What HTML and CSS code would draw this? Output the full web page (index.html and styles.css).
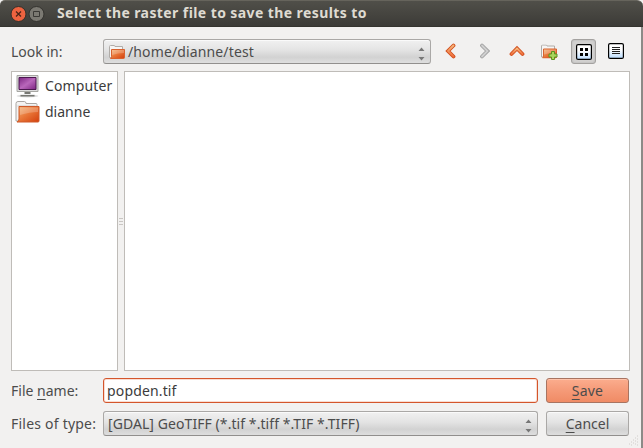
FILE: index.html
```html
<!DOCTYPE html>
<html lang="en">
<head>
<meta charset="utf-8">
<title>Select the raster file to save the results to</title>
<link rel="stylesheet" href="styles.css">
</head>
<body>
<svg width="0" height="0" class="defs" aria-hidden="true">
  <defs>
    <linearGradient id="orange" x1="0" y1="0" x2="1" y2="1"><stop offset="0" stop-color="#f4b77a"/><stop offset=".5" stop-color="#e87537"/><stop offset="1" stop-color="#d33f0c"/></linearGradient>
    <linearGradient id="arrow" x1="0" y1="0" x2="0" y2="1"><stop offset="0" stop-color="#f6b87c"/><stop offset="1" stop-color="#f0703c"/></linearGradient>
    <linearGradient id="screen" x1="0" y1="0" x2="1" y2="1"><stop offset="0" stop-color="#7c2582"/><stop offset=".5" stop-color="#b967bb"/><stop offset="1" stop-color="#7c2582"/></linearGradient>
    <linearGradient id="tile" x1="0" y1="0" x2="0" y2="1"><stop offset=".4" stop-color="#fff"/><stop offset="1" stop-color="#b9dcff"/></linearGradient>
    <symbol id="folder" viewBox="0 0 24 22">
      <path d="M.5 20V2.500Q.5.5 2.500.5H9q1.500 0 1.500 2h10q1 0 1 1V20z" fill="#f4f3f2" stroke="#aaa6a2"/>
      <path d="M2 5h18" stroke="#ccc" fill="none"/>
      <path d="M3.500 5.500h20v14.500q0 1-1 1H1.500q2-1 2-3z" fill="url(#orange)" stroke="#cf5a2a"/>
      <path d="M4.500 6.500h18v4.500q-8 0-18 3z" fill="#fff" opacity=".22"/>
    </symbol>
    <symbol id="smallfolder" viewBox="0 0 16 14">
      <path d="M.5 12.500V1.500q0-1 1-1H5q1 0 1 1h7.500v11z" fill="#f6f5f4" stroke="#b0aca8"/>
      <path d="M2.500 4.500h13v8q0 1-1 1h-13q1-.5 1-2z" fill="url(#orange)" stroke="#d9622f"/>
      <path d="M3 5h12v3q-6 0-12 2z" fill="#fff" opacity=".22"/>
    </symbol>
  </defs>
</svg>
<div class="window">
  <header class="titlebar">
    <svg class="controls" width="36" height="18" viewBox="0 0 36 18">
      <circle cx="8.500" cy="9" r="7.500" fill="#ee6340" stroke="#33302a"/>
      <path d="M6 6.500l5 5M11 6.500l-5 5" stroke="#4b2518" stroke-width="1.300"/>
      <circle cx="26.500" cy="9" r="7.500" fill="#7b7972" stroke="#33322e"/>
      <path d="M23.500 6.500h6v5h-6z" fill="none" stroke="#3a3935"/>
    </svg>
    <h1 class="title"><span class="t-title">Select the raster file to save the results to</span></h1>
  </header>
  <main class="content">
    <div class="lookrow">
      <span class="label"><span class="t-look">Look in:</span></span>
      <div class="combo path">
        <svg width="16" height="14"><use href="#smallfolder" width="16" height="14"/></svg>
        <span class="t-path">/home/dianne/test</span>
        <svg class="spin" width="7" height="14" viewBox="0 0 7 14"><path d="M.5 4L3.500.5 6.500 4zM.5 10L3.500 13.500 6.500 10z" fill="#777"/></svg>
      </div>
      <nav class="tools">
        <span class="tool raised"><svg width="12" height="16" viewBox="0 0 12 16"><path d="M8.500 2.500L3 8l5.500 5.500" fill="none" stroke="#d2501f" stroke-width="3.800" stroke-linecap="round"/><path d="M8.500 2.500L3 8l5.500 5.500" fill="none" stroke="url(#arrow)" stroke-width="1.800" stroke-linecap="round"/></svg></span>
        <span class="tool raised"><svg width="12" height="16" viewBox="0 0 12 16"><path d="M4 2.500L9.500 8 4 13.500" fill="none" stroke="#a3a3a3" stroke-width="3.800" stroke-linecap="round"/><path d="M4 2.500L9.500 8 4 13.500" fill="none" stroke="#d0d0d0" stroke-width="1.800" stroke-linecap="round"/></svg></span>
        <span class="tool raised"><svg width="16" height="12" viewBox="0 0 16 12"><path d="M2.500 9L8 3.500 13.500 9" fill="none" stroke="#d2501f" stroke-width="3.800" stroke-linecap="round"/><path d="M2.500 9L8 3.500 13.500 9" fill="none" stroke="url(#arrow)" stroke-width="1.800" stroke-linecap="round"/></svg></span>
        <span class="tool"><svg width="17" height="16" viewBox="0 0 17 16"><use href="#smallfolder" y=".5" width="16" height="14"/><path d="M10.500 7.500h3v2.500h2.500v3h-2.500v2.500h-3V13H8v-3h2.500z" fill="#a9d45c" stroke="#5a9420"/></svg></span>
        <span class="tool active"><svg width="16" height="16" viewBox="0 0 16 16"><rect x=".6" y=".6" width="14.800" height="14.800" rx="1.500" fill="url(#tile)" stroke="#000" stroke-width="1.200"/><path d="M4 4h3v3H4zM9 4h3v3H9zM4 9h3v3H4zM9 9h3v3H9z"/></svg></span>
        <span class="tool raised"><svg width="16" height="16" viewBox="0 0 16 16"><rect x=".6" y=".6" width="14.800" height="14.800" rx="1.500" fill="url(#tile)" stroke="#000" stroke-width="1.200"/><path d="M4 4.500h8M4 6.500h8M4 8.500h8M4 10.500h8" stroke="#222"/></svg></span>
      </nav>
    </div>
    <div class="panes">
      <ul class="places">
        <li class="place"><svg width="24" height="24" viewBox="0 0 24 24"><ellipse cx="12" cy="22" rx="11" ry="1.500" fill="#ddd"/><path d="M1.500 1.500h21v16h-21z" fill="#ddd" stroke="#a7a7a3"/><path d="M3.500 3.500h17v12h-17z" fill="url(#screen)" stroke="#4b174f"/><path d="M9 18h6v2l4 1v1.500H5V21l4-1z" fill="#777873"/><path d="M5 20.500h14" stroke="#eee"/></svg><span class="t-computer">Computer</span></li>
        <li class="place"><svg width="25" height="22"><use href="#folder" width="25" height="22"/></svg><span class="t-dianne">dianne</span></li>
      </ul>
      <div class="handle"><i></i><i></i><i></i></div>
      <div class="files"></div>
    </div>
    <div class="form">
      <span class="label"><span class="t-name">File <span class="key">n</span>ame:</span></span>
      <div class="input"><span class="t-file">popden.tif</span></div>
      <div class="button primary"><span class="t-save"><span class="key">S</span>ave</span></div>
      <span class="label"><span class="t-type">Files of type:</span></span>
      <div class="combo"><span class="t-gdal">[GDAL] GeoTIFF (*.tif *.tiff *.TIF *.TIFF)</span>
        <svg class="spin" width="7" height="14" viewBox="0 0 7 14"><path d="M.5 4L3.500.5 6.500 4zM.5 10L3.500 13.500 6.500 10z" fill="#777"/></svg>
      </div>
      <div class="button"><span class="t-cancel"><span class="key">C</span>ancel</span></div>
    </div>
    <svg class="grip" width="11" height="11" viewBox="0 0 11 11"><path d="M9 1h1M7 3h1M9 4h1M5 5h1M7 6h1M9 7h1M3 7h1M5 8h1M7 9h1M1 9h1M3 10h1M9 10h1" stroke="#d0cdca"/></svg>
  </main>
</div>
</body>
</html>
```

FILE: styles.css
```css
* { box-sizing: border-box; }
body { margin: 0; background: #3c3b37; font: 14px/20px "Noto Sans", "Open Sans", sans-serif; color: #4c4c4c; }
.defs { position: absolute; }
.window { width: 643px; height: 448px; overflow: hidden; display: flex; flex-direction: column; background: #f2f1f0; }
.titlebar { height: 27px; flex: none; display: flex; align-items: center; padding-left: 10px; gap: 11px; background: linear-gradient(#504f49, #3c3b37); border-top: 1px solid #66645c; border-bottom: 1px solid #35342f; border-radius: 5px 6px 0 0; }
.title { margin: 0 0 2px; font-size: 14px; line-height: 20px; font-weight: 700; color: #dfdbd2; letter-spacing: .41px; }
.content { position: relative; flex: 1; padding: 12px 11px 0 11px; border-right: 2px solid #8c8a87; display: flex; flex-direction: column; }
.content span { white-space: nowrap; }
.lookrow { height: 25px; display: flex; align-items: center; }
.lookrow > .label { width: 92px; }
.combo, .button { height: 25px; display: flex; align-items: center; border: 1px solid #aaa8a6; border-bottom-color: #918f8d; border-radius: 3px; background: linear-gradient(#f1f1f1, #e3e3e3 45%, #d2d2d2 75%, #dedede); box-shadow: inset 0 1px #fafafa; }
.combo { padding: 0 5px 0 4px; }
.path { width: 328px; padding-left: 5px; gap: 3px; }
.t-path { letter-spacing: .13px; }
.t-computer { letter-spacing: .12px; }
.t-type { letter-spacing: .22px; }
.t-gdal { letter-spacing: .07px; }
.t-save { letter-spacing: .2px; }
.t-file { letter-spacing: .15px; }
.spin { margin-left: auto; align-self: flex-end; margin-bottom: 2px; }
.tools { display: flex; gap: 8px; margin-left: 7px; }
.tool { width: 25px; height: 25px; flex: none; display: flex; align-items: center; justify-content: center; }
.tool.raised { padding-bottom: 1px; }
.tool.active { margin: 0 -1px 0 1px; border: 1px solid #a4a2a0; border-radius: 3px; background: #d2d1d0; box-shadow: inset 0 0 2px #aaa; padding-top: 1px; }
.tool svg { display: block; }
.panes { display: flex; height: 300px; margin-top: 7px; }
.places, .files { border: 1px solid #bfbcb8; background: #fff; margin: 0; padding: 0; }
.places { width: 107px; flex: none; list-style: none; padding: 1px 0 0 3px; color: #3c3c3c; }
.place { display: flex; align-items: center; height: 26px; }
.place svg { width: 25px; flex: none; margin-right: 5px; }
.handle { width: 6px; display: flex; flex-direction: column; align-items: center; justify-content: center; gap: 2px; }
.handle i { width: 4px; height: 1px; background: #c9c6c3; }
.files { width: 506px; }
.form { display: grid; grid-template-columns: 84px 435px 83px; grid-template-rows: 25px 25px; gap: 8px; margin-top: 7px; align-items: center; }
.input { height: 25px; display: flex; align-items: center; padding-left: 3px; border: 1px solid #d4552b; border-radius: 3px; background: #fff; box-shadow: inset 0 0 0 1px #f9ddd2; color: #3c3c3c; }
.button { justify-content: center; }
.primary { border-color: #a87461; background: linear-gradient(#fbad8e, #f59a78 50%, #f08b65); box-shadow: inset 0 1px #ffc4ab; }
.key { text-decoration: underline; text-underline-offset: 3px; text-decoration-thickness: 1px; }
.grip { position: absolute; right: 2px; bottom: 2px; }
```
